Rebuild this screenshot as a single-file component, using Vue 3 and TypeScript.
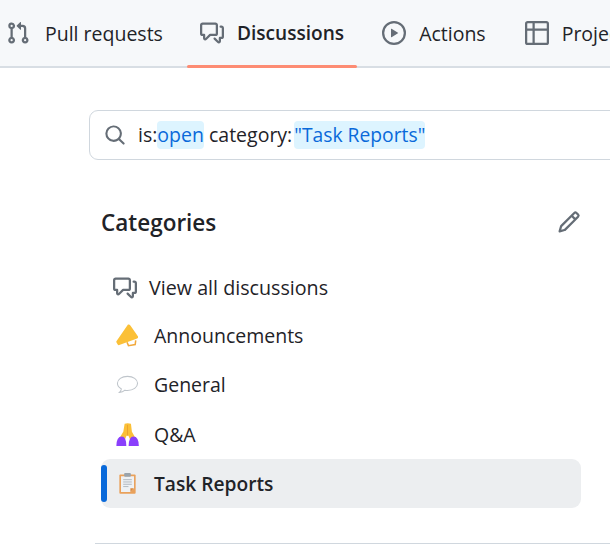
<template>
  <div class="page">
    <nav class="tabs">
      <a v-for="tab in tabs" :key="tab.label" class="tab" :class="{ current: tab.current }">
        <svg class="tab-icon" viewBox="0 0 16 16"><path :d="tab.icon" /></svg>
        <span>{{ tab.label }}</span>
      </a>
    </nav>

    <main class="content">
      <div class="search">
        <svg class="search-icon" viewBox="0 0 16 16"><path :d="searchIcon" /></svg>
        <span class="query">is:<span class="hl">open</span> category:<span class="hl quoted">"Task Reports"</span></span>
      </div>

      <div class="side">
        <div class="side-head">
          <h3>Categories</h3>
          <svg class="pencil" viewBox="0 0 16 16"><path :d="pencilIcon" /></svg>
        </div>

        <ul class="cats">
          <li class="cat all">
            <svg class="all-icon" viewBox="0 0 16 16"><path :d="discussIcon" /></svg>
            <span>View all discussions</span>
          </li>
          <li class="cat">
            <svg class="emoji" viewBox="0 0 24 24">
              <path d="M12.5 .6 Q14 0 15.2 1.8 L23 13 Q23.6 15 21.4 15.4 L3.4 22 Q2.4 22.4 1.6 21 L.4 19 Q0 18 .8 17.4 Z" fill="#fbc037" />
              <path d="M11.5 19 L13 22.6 L20 21.4 L20.6 17" fill="none" stroke="#f2a93b" stroke-width="1.6" />
            </svg>
            <span>Announcements</span>
          </li>
          <li class="cat">
            <svg class="emoji" viewBox="0 0 24 24">
              <path d="M12 3.5 C6 3.5 1.5 6.6 1.5 10.8 C1.5 13.4 3.2 15.4 5.6 16.6 C5.4 18 4.6 19.4 3.6 20.2 C6 20.2 8 19.2 9.4 17.9 C10.2 18.1 11.1 18.2 12 18.2 C18 18.2 22.5 15 22.5 10.8 C22.5 6.6 18 3.5 12 3.5 Z" fill="#fff" stroke="#bfc5cb" stroke-width="1.1" />
            </svg>
            <span>General</span>
          </li>
          <li class="cat">
            <svg class="emoji" viewBox="0 0 24 24">
              <path d="M9 .8 Q12 -.4 15.6 .8 L16.6 9 L20 15 L15 18 L13 13.4 H11 L9 18 L4 15 L7.6 9 Z" fill="#fbc037" />
              <path d="M12 2 V13" stroke="#e89b2c" stroke-width=".8" />
              <path d="M.4 24 Q.4 14 6 14 Q10.8 14 10.8 24 Z" fill="#8a3ffc" />
              <path d="M13.2 24 Q13.2 14 18.2 14 Q23.8 14 23.8 24 Z" fill="#8a3ffc" />
            </svg>
            <span>Q&amp;A</span>
          </li>
          <li class="cat selected">
            <svg class="emoji" viewBox="0 0 24 24">
              <rect x="3.5" y="2.6" width="17" height="20" rx="1" fill="#e9a15b" />
              <path d="M5.2 4.4 H18.8 V17 L15 20.8 H5.2 Z" fill="#eef1f4" />
              <path d="M15 20.8 V17 H18.8 Z" fill="#d8883d" />
              <rect x="8.5" y="1" width="7" height="4" rx="1" fill="#9aa3ab" />
              <path d="M7.5 8 H16.5 M7.5 10.4 H16.5 M7.5 12.8 H16.5 M7.5 15.2 H13" stroke="#a9b1b9" stroke-width=".9" />
            </svg>
            <span>Task Reports</span>
          </li>
        </ul>
      </div>

      <div class="rule"></div>
    </main>
  </div>
</template>

<script setup lang="ts">
interface Tab {
  label: string
  icon: string
  current?: boolean
}

const discussIcon =
  'M1.75 1h8.5c.966 0 1.75.784 1.75 1.75v5.5A1.75 1.75 0 0 1 10.25 10H7.061l-2.574 2.573A1.458 1.458 0 0 1 2 11.543V10h-.25A1.75 1.75 0 0 1 0 8.25v-5.5C0 1.784.784 1 1.75 1ZM1.5 2.75v5.5c0 .138.112.25.25.25h1a.75.75 0 0 1 .75.75v2.19l2.72-2.72a.749.749 0 0 1 .53-.22h3.5a.25.25 0 0 0 .25-.25v-5.5a.25.25 0 0 0-.25-.25h-8.5a.25.25 0 0 0-.25.25Zm13 2a.25.25 0 0 0-.25-.25h-.5a.75.75 0 0 1 0-1.5h.5c.966 0 1.75.784 1.75 1.75v5.5A1.75 1.75 0 0 1 14.25 12H14v1.543a1.458 1.458 0 0 1-2.487 1.03L9.22 12.28a.749.749 0 0 1 .326-1.275.749.749 0 0 1 .734.215l2.22 2.22v-2.19a.75.75 0 0 1 .75-.75h1a.25.25 0 0 0 .25-.25Z'
const searchIcon =
  'M10.68 11.74a6 6 0 0 1-7.922-8.982 6 6 0 0 1 8.982 7.922l3.04 3.04a.749.749 0 0 1-.326 1.275.749.749 0 0 1-.734-.215ZM11.5 7a4.499 4.499 0 1 0-8.997 0A4.499 4.499 0 0 0 11.5 7Z'
const pencilIcon =
  'M11.013 1.427a1.75 1.75 0 0 1 2.474 0l1.086 1.086a1.75 1.75 0 0 1 0 2.474l-8.61 8.61c-.21.21-.47.364-.756.445l-3.251.93a.75.75 0 0 1-.927-.928l.929-3.25c.081-.286.235-.547.445-.758l8.61-8.61Zm.176 4.823L9.75 4.81l-6.286 6.287a.253.253 0 0 0-.064.108l-.558 1.953 1.953-.558a.253.253 0 0 0 .108-.064Zm1.238-3.763a.25.25 0 0 0-.354 0L10.811 3.75l1.439 1.44 1.263-1.263a.25.25 0 0 0 0-.354Z'

const tabs: Tab[] = [
  {
    label: 'Pull requests',
    icon: 'M1.5 3.25a2.25 2.25 0 1 1 3 2.122v5.256a2.251 2.251 0 1 1-1.5 0V5.372A2.25 2.25 0 0 1 1.5 3.25Zm5.677-.177L9.573.677A.25.25 0 0 1 10 .854V2.5h1A2.5 2.5 0 0 1 13.5 5v5.628a2.251 2.251 0 1 1-1.5 0V5a1 1 0 0 0-1-1h-1v1.646a.25.25 0 0 1-.427.177L7.177 3.427a.25.25 0 0 1 0-.354ZM3.75 2.5a.75.75 0 1 0 0 1.5.75.75 0 0 0 0-1.5Zm0 9.5a.75.75 0 1 0 0 1.5.75.75 0 0 0 0-1.5Zm8.25.75a.75.75 0 1 0 1.5 0 .75.75 0 0 0-1.5 0Z'
  },
  { label: 'Discussions', icon: discussIcon, current: true },
  {
    label: 'Actions',
    icon: 'M8 0a8 8 0 1 1 0 16A8 8 0 0 1 8 0ZM1.5 8a6.5 6.5 0 1 0 13 0 6.5 6.5 0 0 0-13 0Zm4.879-2.773 4.264 2.559a.25.25 0 0 1 0 .428l-4.264 2.559A.25.25 0 0 1 6 10.559V5.442a.25.25 0 0 1 .379-.215Z'
  },
  {
    label: 'Projects',
    icon: 'M0 1.75C0 .784.784 0 1.75 0h12.5C15.216 0 16 .784 16 1.75v12.5A1.75 1.75 0 0 1 14.25 16H1.75A1.75 1.75 0 0 1 0 14.25ZM6.5 6.5v8h7.75a.25.25 0 0 0 .25-.25V6.5Zm8-1.5V1.75a.25.25 0 0 0-.25-.25H6.5V5Zm-13 1.5v7.75c0 .138.112.25.25.25H5v-8ZM5 5V1.5H1.75a.25.25 0 0 0-.25.25V5Z'
  }
]
</script>

<style>
html,
body {
  margin: 0;
  background: #fff;
}
</style>

<style scoped>
.page {
  width: 610px;
  height: 544px;
  overflow: hidden;
  font-family: "Open Sans", "Noto Sans", sans-serif;
  font-size: 19.5px;
  color: #1f2328;
}

.tabs {
  display: flex;
  height: 66px;
  background: #f6f8fa;
  border-bottom: 2px solid #d8dee4;
  white-space: nowrap;
}

.tab {
  display: flex;
  align-items: center;
  gap: 13px;
  height: 66px;
  margin-left: 12px;
  padding: 0 14px 0 13px;
  position: relative;
  flex-shrink: 0;
}

.tab:first-child {
  gap: 15px;
  margin-left: 0;
  padding: 0 12px 0 6px;
}

.tab.current {
  font-size: 19.1px;
  font-weight: 600;
  margin-left: 12px;
  padding-right: 13px;
}

.tab.current::after {
  content: "";
  position: absolute;
  left: 0;
  right: 0;
  bottom: -2px;
  height: 3px;
  background: #fd8c73;
  border-radius: 2px;
}

.tab-icon {
  width: 24px;
  height: 24px;
  fill: #656d76;
  flex-shrink: 0;
}

.content {
  padding: 42px 0 0 89px;
}

.search {
  display: flex;
  align-items: center;
  gap: 12px;
  width: 600px;
  height: 50px;
  padding-left: 14px;
  box-sizing: border-box;
  border: 1px solid #d0d7de;
  border-radius: 9px;
}

.search-icon {
  width: 22px;
  height: 22px;
  fill: #656d76;
  flex-shrink: 0;
}

.query {
  white-space: nowrap;
}

.hl {
  display: inline-block;
  line-height: 28px;
  color: #0969da;
  background: #ddf4ff;
  border-radius: 4px;
}

.quoted {
  margin-left: 2px;
  font-size: 19.3px;
}

.side {
  width: 480px;
  margin-left: 12px;
}

.side-head {
  display: flex;
  align-items: center;
  justify-content: space-between;
  margin-top: 45px;
  height: 34px;
}

.side-head h3 {
  margin: 0;
  font-size: 22.5px;
  font-weight: 600;
}

.pencil {
  width: 24px;
  height: 24px;
  fill: #656d76;
}

.cats {
  list-style: none;
  margin: 22px 0 0;
  padding: 0;
}

.cat {
  display: flex;
  align-items: center;
  gap: 15px;
  height: 49.5px;
  padding-left: 15px;
  position: relative;
  border-radius: 9px;
}

.cat.all {
  gap: 12px;
  box-sizing: border-box;
  padding: 4px 0 0 12px;
  font-size: 19.7px;
}

.all-icon {
  width: 24px;
  height: 24px;
  fill: #656d76;
}

.emoji {
  width: 23px;
  height: 23px;
  flex-shrink: 0;
}

.selected {
  height: 49px;
  background: #eceef0;
  font-size: 19.2px;
  font-weight: 600;
}

.selected::before {
  content: "";
  position: absolute;
  left: 0;
  top: 6px;
  width: 6px;
  height: 37px;
  border-radius: 3px;
  background: #0969da;
}

.rule {
  height: 1px;
  margin: 35px 0 0 6px;
  background: #d0d7de;
}
</style>
